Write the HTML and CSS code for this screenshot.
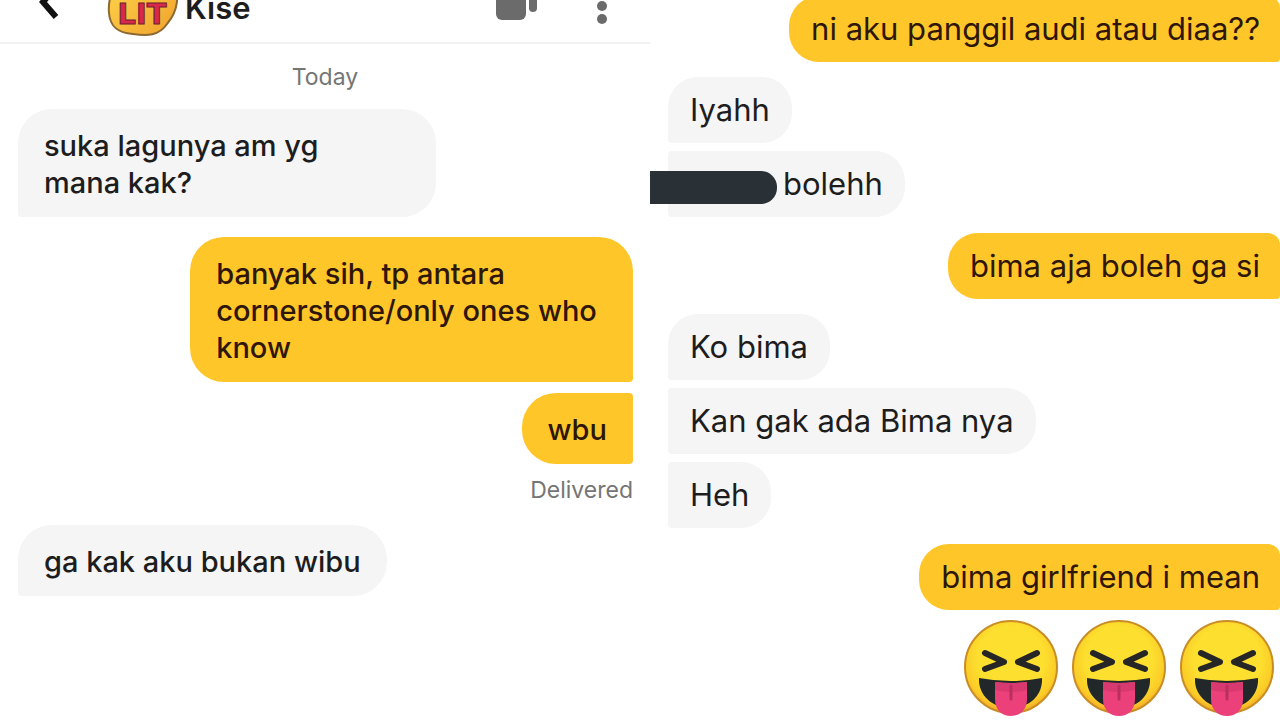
FILE: index.html
```
<!DOCTYPE html>
<html lang="id">
<head>
    <meta charset="utf-8">
    <title>Kise</title>
    <link rel="stylesheet" href="styles.css">
</head>
<body>
    <svg class="symbols" aria-hidden="true">
        <defs>
            <radialGradient id="face" cx="50%" cy="42%" r="60%">
                <stop offset="0.6" stop-color="#fde02f"/>
                <stop offset="0.85" stop-color="#fbcb27"/>
                <stop offset="1" stop-color="#f29a26"/>
            </radialGradient>
            <linearGradient id="lit" x1="0" y1="0" x2="1" y2="1">
                <stop offset="0.3" stop-color="#fbc944"/>
                <stop offset="1" stop-color="#f0a02c"/>
            </linearGradient>
        </defs>
        <symbol id="squint" viewBox="0 0 96 96">
            <circle cx="48" cy="47" r="46" fill="url(#face)" stroke="#c98d25" stroke-width="2"/>
            <path d="M22 33 L41 42 L22 49 M74 33 L55 42 L74 49" fill="none" stroke="#262626" stroke-width="6" stroke-linecap="round" stroke-linejoin="round"/>
            <path d="M16 58 Q48 64 79 58 C80 74 68 88 48 88 C28 88 15 74 16 58 Z" fill="#22282a"/>
            <path d="M32 62 Q48 64 64 62 V79 C64 90 57 96 48 96 C39 96 32 90 32 79 Z" fill="#ec407a"/>
            <path d="M32 62 Q48 64 64 62 V70 Q48 74 32 70 Z" fill="#d83a70"/>
            <path d="M48 66 V79" stroke="#b82f60" stroke-width="3" stroke-linecap="round"/>
        </symbol>
    </svg>

    <main class="chats">
        <section class="chat chat-first">
            <header class="topbar">
                <button class="icon-button back" aria-label="Back">
                    <svg width="24" height="36" viewBox="0 0 24 36"><path d="M20 2 L7 17 L20 32" fill="none" stroke="#111" stroke-width="6"/></svg>
                </button>
                <svg class="avatar" width="72" height="72" viewBox="0 0 72 72" role="img" aria-label="LIT">
                    <path d="M10 19 C20 2 52 0 64 15 C74 29 71 46 60 59 C52 71 40 71 26 69 C10 68 3 61 2 48 C1 37 4 27 10 19 Z" fill="url(#lit)" stroke="#8d6932" stroke-width="2"/>
                    <text class="avatar-text" x="35" y="59" text-anchor="middle">LIT</text>
                </svg>
                <h1 class="name">Kise</h1>
                <button class="icon-button video" aria-label="Video call">
                    <svg width="44" height="36" viewBox="0 0 44 36"><rect x="0" y="2" width="30" height="33" rx="6" fill="#6b6b6b"/><rect x="33" y="7" width="8" height="20" rx="4" fill="#6b6b6b"/></svg>
                </button>
                <button class="icon-button more" aria-label="More">
                    <svg width="12" height="36" viewBox="0 0 12 36"><circle cx="6" cy="5" r="5" fill="#6b6b6b"/><circle cx="6" cy="18" r="5" fill="#6b6b6b"/><circle cx="6" cy="31" r="5" fill="#6b6b6b"/></svg>
                </button>
            </header>
            <p class="day">Today</p>
            <div class="messages">
                <p class="bubble received short">suka lagunya am yg<br>mana kak?</p>
                <p class="bubble sent turn wide">banyak sih, tp antara<br>cornerstone/only ones who<br>know</p>
                <p class="bubble sent follow">wbu</p>
                <p class="status">Delivered</p>
                <p class="bubble received turn">ga kak aku bukan wibu</p>
            </div>
        </section>

        <section class="chat chat-second">
            <div class="messages">
                <p class="bubble sent">ni aku panggil audi atau diaa??</p>
                <p class="bubble received turn">Iyahh</p>
                <p class="bubble received follow"><span class="redacted"></span>bolehh</p>
                <p class="bubble sent turn">bima aja boleh ga si</p>
                <p class="bubble received turn">Ko bima</p>
                <p class="bubble received follow">Kan gak ada Bima nya</p>
                <p class="bubble received follow">Heh</p>
                <p class="bubble sent turn">bima girlfriend i mean</p>
                <div class="emojis" role="img" aria-label="Squinting faces with tongue">
                    <svg class="emoji"><use href="#squint"/></svg>
                    <svg class="emoji"><use href="#squint"/></svg>
                    <svg class="emoji"><use href="#squint"/></svg>
                </div>
            </div>
        </section>
    </main>
</body>
</html>
```
FILE: styles.css
```
* {
    box-sizing: border-box;
}
body {
    margin: 0;
    background-color: #fff;
    color: #1d1d1d;
    font-family: Inter, Lato, sans-serif;
    font-size: 29px;
}
p, h1 {
    margin: 0;
}
.symbols {
    position: absolute;
    width: 0;
    height: 0;
}
.chats {
    display: grid;
    grid-template-columns: 65fr 63fr;
    height: 100vh;
    overflow: hidden;
}
.chat {
    min-width: 0;
    overflow: hidden;
}
.topbar {
    display: flex;
    align-items: flex-end;
    height: 44px;
    padding: 0 42px 5px 36px;
    border-bottom: 2px solid #f2f2f2;
    overflow: hidden;
}
.icon-button {
    display: flex;
    padding: 0;
    border: none;
    background: none;
    cursor: pointer;
}
.back {
    margin-bottom: 16px;
}
.avatar {
    flex: none;
    margin-left: 47px;
}
.avatar-text {
    font-family: "DejaVu Sans", sans-serif;
    font-size: 29px;
    font-weight: bold;
    fill: #d9284b;
    stroke: #6d2030;
    stroke-width: 1px;
}
.name {
    flex: 1;
    margin-left: 6px;
    margin-bottom: 9px;
    font-size: 31px;
    font-weight: 600;
    line-height: 40px;
}
.video {
    margin-bottom: 16px;
}
.more {
    margin-left: 56px;
    margin-bottom: 13px;
}
.day {
    padding: 19px 0 17px;
    color: #757575;
    font-size: 23px;
    line-height: 29px;
    text-align: center;
}
.messages {
    display: flex;
    flex-direction: column;
    align-items: flex-start;
}
.chat-first .messages {
    padding: 0 17px 0 18px;
    font-weight: 500;
}
.chat-second .messages {
    padding-left: 18px;
    font-size: 31px;
}
.bubble {
    position: relative;
    padding: 18px 26px 16px;
    border-radius: 34px;
    line-height: 37px;
}
.received {
    background-color: #f5f5f5;
    border-bottom-left-radius: 4px;
}
.sent {
    align-self: flex-end;
    background-color: #ffc629;
    border-bottom-right-radius: 4px;
    color: #2e1608;
}
.short {
    width: 68%;
}
.wide {
    width: 72%;
}
.turn {
    margin-top: 20px;
}
.follow {
    margin-top: 11px;
}
.received.follow {
    border-top-left-radius: 4px;
}
.sent.follow {
    border-top-right-radius: 4px;
}
.status {
    align-self: flex-end;
    padding-top: 12px;
    color: #757575;
    font-size: 23px;
    font-weight: 400;
    line-height: 29px;
}
.chat-second .bubble {
    padding: 14px 22px;
    border-radius: 30px;
    line-height: 38px;
}
.chat-second .received {
    border-bottom-left-radius: 4px;
}
.chat-second .received.follow {
    border-top-left-radius: 4px;
}
.chat-second .sent {
    padding-right: 20px;
    border-bottom-right-radius: 4px;
    border-top-right-radius: 12px;
}
.chat-second .sent:first-child {
    margin-top: -4px;
}
.chat-second .turn {
    margin-top: 15px;
}
.chat-second .sent.turn {
    margin-top: 16px;
}
.chat-second .follow {
    margin-top: 8px;
}
.redacted {
    display: inline-block;
    width: 93px;
}
.redacted::before {
    content: "";
    position: absolute;
    top: 20px;
    left: -18px;
    width: 127px;
    height: 33px;
    border-radius: 0 16px 16px 0;
    background-color: #2a3136;
}
.emojis {
    display: flex;
    align-self: flex-end;
    gap: 12px;
    padding: 10px 5px 0 0;
}
.emoji {
    width: 96px;
    height: 96px;
}
```
